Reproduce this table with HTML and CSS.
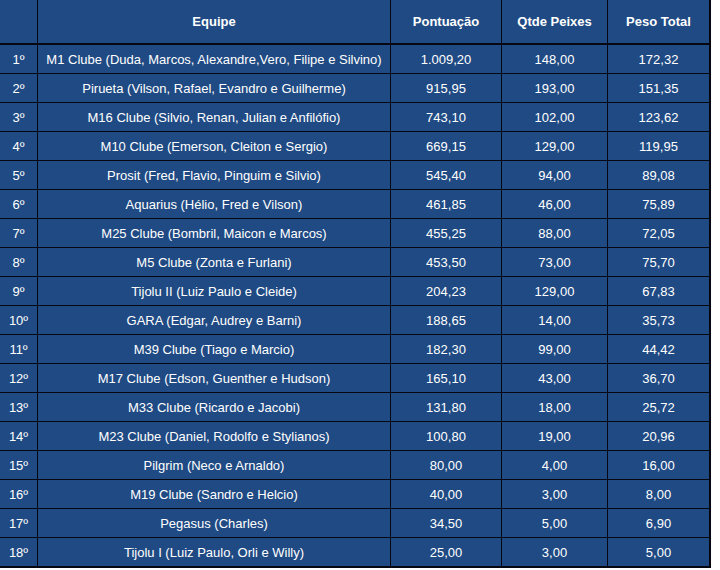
FILE: index.html
```html
<!DOCTYPE html>
<html>
<head>
<meta charset="utf-8">
<link rel="stylesheet" href="styles.css">
</head>
<body>
<div class="table">
  <div class="row head">
    <div class="c"></div><div class="c">Equipe</div><div class="c">Pontuação</div><div class="c">Qtde Peixes</div><div class="c">Peso Total</div>
  </div>
  <div class="row"><div class="c">1º</div><div class="c">M1 Clube (Duda, Marcos, Alexandre,Vero, Filipe e Silvino)</div><div class="c">1.009,20</div><div class="c">148,00</div><div class="c">172,32</div></div>
  <div class="row"><div class="c">2º</div><div class="c">Pirueta (Vilson, Rafael, Evandro e Guilherme)</div><div class="c">915,95</div><div class="c">193,00</div><div class="c">151,35</div></div>
  <div class="row"><div class="c">3º</div><div class="c">M16 Clube (Silvio, Renan, Julian e Anfilófio)</div><div class="c">743,10</div><div class="c">102,00</div><div class="c">123,62</div></div>
  <div class="row"><div class="c">4º</div><div class="c">M10 Clube (Emerson, Cleiton e Sergio)</div><div class="c">669,15</div><div class="c">129,00</div><div class="c">119,95</div></div>
  <div class="row"><div class="c">5º</div><div class="c">Prosit (Fred, Flavio, Pinguim e Silvio)</div><div class="c">545,40</div><div class="c">94,00</div><div class="c">89,08</div></div>
  <div class="row"><div class="c">6º</div><div class="c">Aquarius (Hélio, Fred e Vilson)</div><div class="c">461,85</div><div class="c">46,00</div><div class="c">75,89</div></div>
  <div class="row"><div class="c">7º</div><div class="c">M25 Clube (Bombril, Maicon e Marcos)</div><div class="c">455,25</div><div class="c">88,00</div><div class="c">72,05</div></div>
  <div class="row"><div class="c">8º</div><div class="c">M5 Clube (Zonta e Furlani)</div><div class="c">453,50</div><div class="c">73,00</div><div class="c">75,70</div></div>
  <div class="row"><div class="c">9º</div><div class="c">Tijolu II (Luiz Paulo e Cleide)</div><div class="c">204,23</div><div class="c">129,00</div><div class="c">67,83</div></div>
  <div class="row"><div class="c">10º</div><div class="c">GARA (Edgar, Audrey e Barni)</div><div class="c">188,65</div><div class="c">14,00</div><div class="c">35,73</div></div>
  <div class="row"><div class="c">11º</div><div class="c">M39 Clube (Tiago e Marcio)</div><div class="c">182,30</div><div class="c">99,00</div><div class="c">44,42</div></div>
  <div class="row"><div class="c">12º</div><div class="c">M17 Clube (Edson, Guenther e Hudson)</div><div class="c">165,10</div><div class="c">43,00</div><div class="c">36,70</div></div>
  <div class="row"><div class="c">13º</div><div class="c">M33 Clube (Ricardo e Jacobi)</div><div class="c">131,80</div><div class="c">18,00</div><div class="c">25,72</div></div>
  <div class="row"><div class="c">14º</div><div class="c">M23 Clube (Daniel, Rodolfo e Stylianos)</div><div class="c">100,80</div><div class="c">19,00</div><div class="c">20,96</div></div>
  <div class="row"><div class="c">15º</div><div class="c">Pilgrim (Neco e Arnaldo)</div><div class="c">80,00</div><div class="c">4,00</div><div class="c">16,00</div></div>
  <div class="row"><div class="c">16º</div><div class="c">M19 Clube (Sandro e Helcio)</div><div class="c">40,00</div><div class="c">3,00</div><div class="c">8,00</div></div>
  <div class="row"><div class="c">17º</div><div class="c">Pegasus (Charles)</div><div class="c">34,50</div><div class="c">5,00</div><div class="c">6,90</div></div>
  <div class="row last"><div class="c">18º</div><div class="c">Tijolu I (Luiz Paulo, Orli e Willy)</div><div class="c">25,00</div><div class="c">3,00</div><div class="c">5,00</div></div>
</div>
</body>
</html>
```
FILE: styles.css
```css
html, body {
  margin: 0;
  padding: 0;
  background: #ffffff;
}
.table {
  width: 709px;
  border-right: 2px solid #050810;
  background: #204a83;
  font-family: "Liberation Sans", Arial, sans-serif;
  font-size: 13px;
  color: #ffffff;
}
.row {
  display: grid;
  grid-template-columns: 37px 352px 110px 105px 101px;
  column-gap: 1px;
  background: #050810;
  height: 28px;
  border-bottom: 1px solid #050810;
}
.row.head {
  height: 43px;
  border-bottom: 2px solid #050810;
  font-weight: bold;
}
.row.last {
  border-bottom: 2px solid #050810;
}
.c {
  background: #204a83;
  display: flex;
  align-items: center;
  justify-content: center;
  white-space: nowrap;
  overflow: hidden;
}
```
